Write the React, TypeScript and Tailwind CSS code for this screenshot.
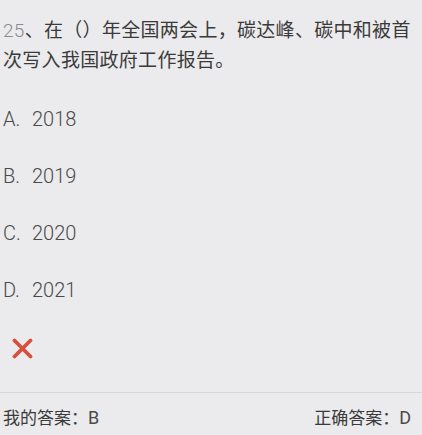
import React from "react";

const font = { fontFamily: '"Roboto", "Liberation Sans", "Noto Sans CJK SC", sans-serif' };

export default function App() {
  const options = [
    ["A.", "2018"],
    ["B.", "2019"],
    ["C.", "2020"],
    ["D.", "2021"],
  ];
  return (
    <div className="w-[422px] h-[435px] overflow-hidden bg-[#ebeaec] text-[#3a3a3a]" style={font}>
      <div className="pl-[3px] pr-2 pt-[16px] h-[90px] text-[19px] leading-[30px] tracking-[0.3px]">
        <span className="text-[#8a8a8a] font-light">25</span>、在（）年全国两会上，碳达峰、碳中和被首次写入我国政府工作报告。
      </div>
      {options.map(([k, v]) => (
        <div key={k} className="h-[57px] flex items-center pl-[3px] text-[20px] font-light text-[#4a4a4a]">
          <span className="w-[29px]">{k}</span>
          <span>{v}</span>
        </div>
      ))}
      <div className="h-[74px] pl-[12px] pt-[20px]">
        <svg width="21" height="21" viewBox="0 0 21 21">
          <path d="M2.5 2.5 L18.5 18.5 M18.5 2.5 L2.5 18.5" stroke="#d6503f" strokeWidth="3.8" strokeLinecap="round" />
        </svg>
      </div>
      <div className="border-t border-[#d7d6d8] flex justify-between pl-[3px] pr-[11px] pt-[13px] text-[17px] leading-[24px] text-[#3a3a3a]">
        <span>我的答案：<span className="text-[18px] text-[#4a4a4a]">B</span></span>
        <span>正确答案：<span className="text-[18px] text-[#4a4a4a]">D</span></span>
      </div>
    </div>
  );
}
